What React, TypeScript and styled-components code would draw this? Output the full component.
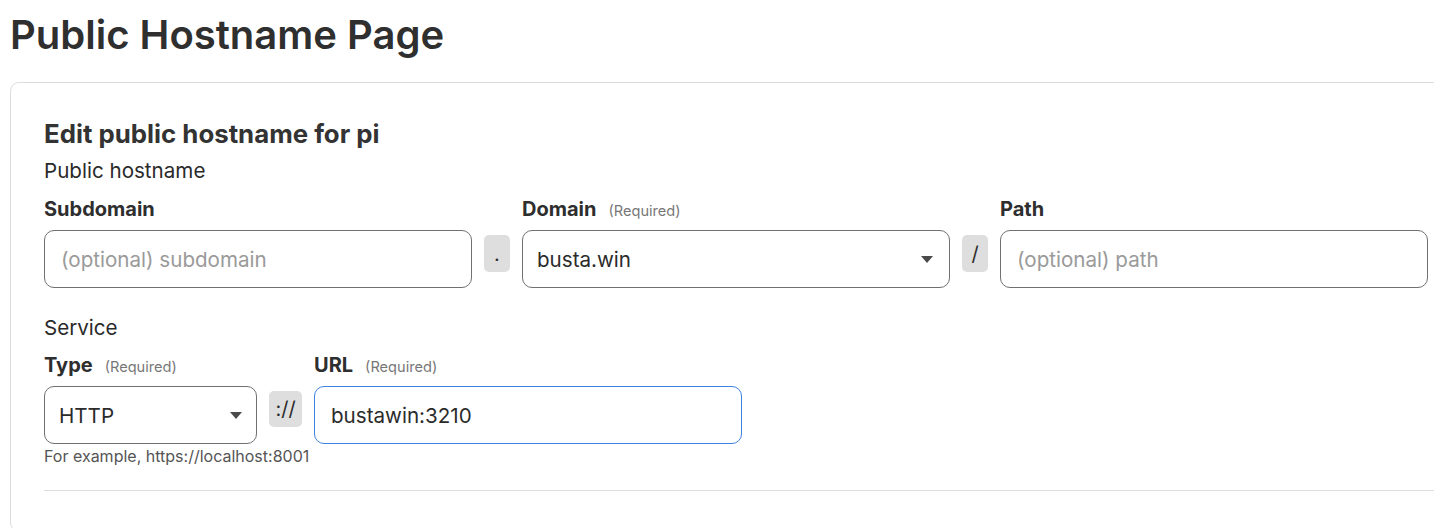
import React from "react";
import styled, { createGlobalStyle } from "styled-components";

const GlobalStyle = createGlobalStyle`
  html, body {
    margin: 0;
    padding: 0;
    background: #ffffff;
    overflow: hidden;
  }
  body {
    font-family: Inter, "Noto Sans", "Liberation Sans", sans-serif;
    color: #333333;
  }
  * { box-sizing: border-box; }
`;

const Page = styled.div`
  padding: 11px 0 0 10px;
  width: 1480px;
`;

const PageTitle = styled.h1`
  margin: 0;
  font-size: 40px;
  line-height: 48px;
  font-weight: 600;
  color: #2f2f2f;
`;

const Card = styled.section`
  margin-top: 23px;
  width: 1460px;
  border: 1px solid #dcdcdc;
  border-radius: 9px;
  padding: 35px 0 40px 33px;
`;

const CardTitle = styled.h2`
  margin: 0;
  font-size: 25.8px;
  line-height: 32px;
  font-weight: 700;
  color: #333;
`;

const SectionLabel = styled.div<{ $gap: number }>`
  margin-top: ${(p) => p.$gap}px;
  font-size: 20.6px;
  line-height: 26px;
  font-weight: 400;
  color: #2a2a2a;
`;

const FieldGrid = styled.div<{ $cols: string; $top: number }>`
  display: grid;
  grid-template-columns: ${(p) => p.$cols};
  grid-template-rows: auto auto;
  column-gap: 12px;
  row-gap: 9px;
  margin-top: ${(p) => p.$top}px;
`;

const Label = styled.div`
  display: flex;
  align-items: baseline;
  gap: 12px;
  height: 24px;
  font-size: 20px;
  line-height: 24px;
  font-weight: 700;
  color: #2e2e2e;
`;

const Required = styled.span`
  font-size: 14.6px;
  line-height: 16px;
  font-weight: 400;
  color: #777777;
`;

const Spacer = styled.div``;

const TextInput = styled.input<{ $focused?: boolean }>`
  height: 58px;
  width: 100%;
  border: ${(p) => (p.$focused ? "1.5px solid #3b82e0" : "1px solid #707070")};
  border-radius: 10px;
  padding: 0 16px;
  font-family: Inter, "Noto Sans", sans-serif;
  font-size: 20.6px;
  color: #2b2b2b;
  background: #fff;
  outline: none;
  &::placeholder {
    color: #9a9a9a;
  }
`;

const Select = styled.div<{ $arrowRight: number }>`
  height: 58px;
  border: 1px solid #707070;
  border-radius: 10px;
  padding: 0 ${(p) => p.$arrowRight}px 0 14px;
  display: flex;
  align-items: center;
  justify-content: space-between;
  font-size: 20.6px;
  color: #2b2b2b;
`;

const Joiner = styled.div<{ $w: number; $h: number }>`
  width: ${(p) => p.$w}px;
  height: ${(p) => p.$h}px;
  margin-top: 5px;
  align-self: start;
  background: #dedede;
  border-radius: 5px;
  display: flex;
  align-items: center;
  justify-content: center;
  font-size: 20px;
  color: #2b2b2b;
`;

const ServiceColumn = styled.div`
  display: flex;
  flex-direction: column;
`;

const Helper = styled.div`
  margin-top: 2px;
  font-size: 16px;
  line-height: 20px;
  color: #555555;
  white-space: nowrap;
`;

const Divider = styled.hr`
  margin: 24px 0 0 0;
  border: none;
  border-top: 1px solid #dddddd;
  height: 0;
`;

const Caret = () => (
  <svg width="12" height="7" viewBox="0 0 12 7">
    <path d="M0 0 L12 0 L6 7 Z" fill="#4a4a4a" />
  </svg>
);

export default function App() {
  return (
    <>
      <GlobalStyle />
      <Page>
        <PageTitle>Public Hostname Page</PageTitle>
        <Card>
          <CardTitle>Edit public hostname for pi</CardTitle>
          <SectionLabel $gap={8}>Public hostname</SectionLabel>
          <FieldGrid $cols="428px 26px 428px 26px 428px" $top={13}>
            <Label>Subdomain</Label>
            <Spacer />
            <Label>
              Domain <Required>(Required)</Required>
            </Label>
            <Spacer />
            <Label>Path</Label>
            <TextInput placeholder="(optional) subdomain" />
            <Joiner $w={26} $h={37}>.</Joiner>
            <Select $arrowRight={16}>
              <span>busta.win</span>
              <Caret />
            </Select>
            <Joiner $w={26} $h={37}>/</Joiner>
            <TextInput placeholder="(optional) path" />
          </FieldGrid>
          <SectionLabel $gap={27}>Service</SectionLabel>
          <FieldGrid $cols="213px 33px 428px" $top={12}>
            <Label>
              Type <Required>(Required)</Required>
            </Label>
            <Spacer />
            <Label>
              URL <Required>(Required)</Required>
            </Label>
            <ServiceColumn>
              <Select $arrowRight={14}>
                <span>HTTP</span>
                <Caret />
              </Select>
              <Helper>For example, https://localhost:8001</Helper>
            </ServiceColumn>
            <Joiner $w={33} $h={36}>://</Joiner>
            <TextInput $focused defaultValue="bustawin:3210" readOnly />
          </FieldGrid>
          <Divider />
        </Card>
      </Page>
    </>
  );
}
